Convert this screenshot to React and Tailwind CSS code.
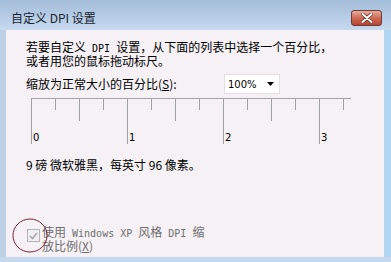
const TICKS = Array.from({ length: 14 }, (_, i) => i);

function Ruler() {
  return (
    <svg width="322" height="47" className="block">
      <line x1="0" y1="0.5" x2="320" y2="0.5" stroke="#a4a4a4" />
      {TICKS.map((i) => {
        const x = i * 24 + 0.5;
        const len = i % 4 === 0 ? 46 : i % 2 === 0 ? 23 : 12;
        return <line key={i} x1={x} y1="0" x2={x} y2={len} stroke="#a0a0a0" />;
      })}
      {[0, 1, 2, 3].map((n) => (
        <text
          key={n}
          x={n * 96 + 2}
          y="43"
          fontSize="10"
          fontFamily="DejaVu Sans, sans-serif"
          fill="#000"
        >
          {n}
        </text>
      ))}
    </svg>
  );
}

// half-width latin, like the bitmap font in the dialog
function Latin({ children }) {
  return (
    <span className="whitespace-pre font-['DejaVu_Sans_Mono',monospace] text-[10px]">{children}</span>
  );
}

export default function App() {
  return (
    <div className="flex h-[262px] w-[391px] flex-col overflow-hidden bg-[#c3d7ec] font-['Noto_Sans_CJK_SC',sans-serif]">
      {/* title bar */}
      <div className="flex h-[30px] items-start bg-gradient-to-b from-[#a3bcd9] to-[#c6daef] pl-[11px] pr-[9px]">
        <span className="mt-[11px] text-[12px] leading-[14px] text-[#1a2230]">自定义 DPI 设置</span>
        <button className="ml-auto mt-[10px] flex h-[16px] w-[31px] items-center justify-center rounded-[3px] border border-[#6e3a36] bg-gradient-to-b from-[#e7aa98] via-[#cf6a55] to-[#b8432f]">
          <svg width="12" height="10" viewBox="0 0 12 10">
            <path d="M1.5 1 L10.5 9 M10.5 1 L1.5 9" stroke="#5a2a24" strokeWidth="3.4" strokeLinecap="round" />
            <path d="M1.5 1 L10.5 9 M10.5 1 L1.5 9" stroke="#fff" strokeWidth="2" strokeLinecap="round" />
          </svg>
        </button>
      </div>

      <div className="flex min-h-0 flex-1">
        <div className="w-[6px] bg-[#bccfe4]" />
        <div className="relative flex-1 bg-[#f5f1f5] pl-[20px] text-[12px] text-black">
          <p className="pt-[11px] leading-[12px]">
            若要自定义<Latin> DPI </Latin>设置，从下面的列表中选择一个百分比，
            <br />
            或者用您的鼠标拖动标尺。
          </p>

          <div className="mt-[7px] flex h-[20px] items-center">
            <span className="w-[198px] leading-[12px]">
              缩放为正常大小的百分比(<span className="underline">S</span>):
            </span>
            <div className="flex h-[20px] w-[56px] items-center border border-[#e4e0e4] bg-white pl-[3px] pr-[5px]">
              <span className="font-['DejaVu_Sans',sans-serif] text-[10px]">100%</span>
              <svg width="7" height="4" viewBox="0 0 7 4" className="ml-auto">
                <path d="M0 0 H7 L3.5 4 Z" fill="#000" />
              </svg>
            </div>
          </div>

          <div className="ml-[5px] mt-[4px]">
            <Ruler />
          </div>

          <p className="mt-[13px] leading-[14px]">9 磅 微软雅黑，每英寸 96 像素。</p>

          <div className="mt-[54px] flex items-start gap-[2px] text-[#6e6e6e]">
            <div className="ml-[1px] mt-[3px] flex h-[13px] w-[13px] shrink-0 items-center justify-center border border-[#b4b4b4] bg-[#f0eef0]">
              <svg width="9" height="8" viewBox="0 0 9 8">
                <path d="M1 4 L3.5 6.5 L8 1" stroke="#a8a8a8" strokeWidth="1.6" fill="none" />
              </svg>
            </div>
            <span className="leading-[12px]">
              使用<Latin> Windows XP </Latin>风格<Latin> DPI </Latin>缩
              <br />
              放比例(<span className="underline">X</span>)
            </span>
          </div>

          <svg width="37" height="36" className="absolute left-[6px] top-[188px]">
            <ellipse cx="18" cy="17.5" rx="17" ry="16.5" stroke="#7a2434" strokeWidth="1" fill="none" />
          </svg>
        </div>
        <div className="w-[7px] bg-[#b2d6f1]" />
      </div>
      <div className="h-[5px] bg-[#c5d8ee]" />
    </div>
  );
}
